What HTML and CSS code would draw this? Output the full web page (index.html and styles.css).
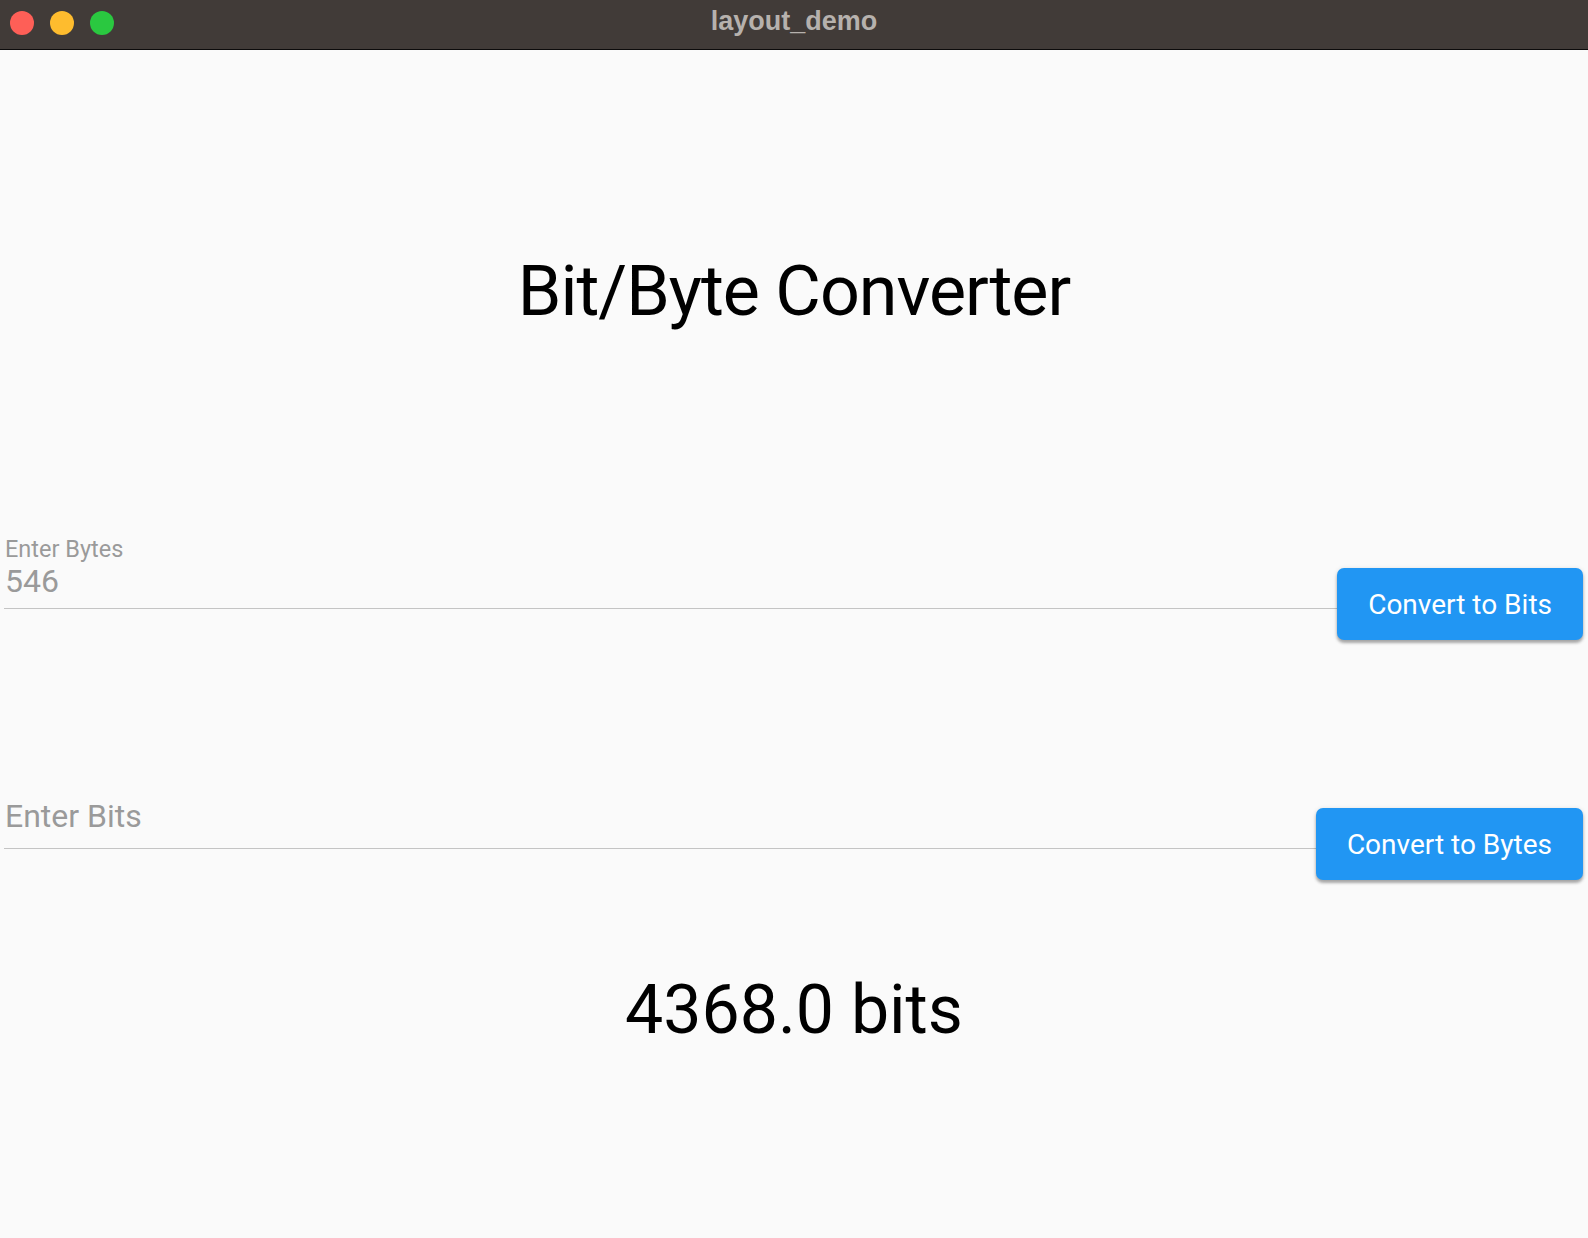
FILE: index.html
```html
<!DOCTYPE html>
<html>
<head>
<meta charset="utf-8">
<title>layout_demo</title>
<link rel="stylesheet" href="styles.css">
</head>
<body>
<div class="window">
  <header class="titlebar">
    <div class="lights">
      <span class="light red"></span>
      <span class="light yellow"></span>
      <span class="light green"></span>
    </div>
    <div class="win-title">layout_demo</div>
  </header>
  <main class="content">
    <h1 class="heading">Bit/Byte Converter</h1>
    <div class="row row-bytes">
      <div class="field">
        <div class="field-label">Enter Bytes</div>
        <div class="field-value">546</div>
      </div>
      <button class="btn">Convert to Bits</button>
    </div>
    <div class="row row-bits">
      <div class="field field-empty">
        <div class="field-value">Enter Bits</div>
      </div>
      <button class="btn">Convert to Bytes</button>
    </div>
    <div class="result">4368.0 bits</div>
  </main>
</div>
</body>
</html>
```
FILE: styles.css
```css
* { box-sizing: border-box; }
html, body {
  margin: 0;
  padding: 0;
  background: #fafafa;
}
body {
  font-family: Roboto, "Liberation Sans", sans-serif;
  width: 1588px;
  height: 1238px;
  overflow: hidden;
}
.window {
  display: flex;
  flex-direction: column;
  height: 1238px;
}
.titlebar {
  height: 50px;
  flex: 0 0 50px;
  background: #413b38;
  border-bottom: 1px solid #0c0b0b;
  display: flex;
  align-items: center;
  position: relative;
}
.lights {
  display: flex;
  gap: 16px;
  padding-left: 10px;
  margin-top: -3px;
}
.light {
  width: 24px;
  height: 24px;
  border-radius: 50%;
  display: block;
}
.red { background: #fe5f57; }
.yellow { background: #febc2e; }
.green { background: #2ac840; }
.win-title {
  position: absolute;
  left: 0;
  right: 0;
  top: 0;
  height: 49px;
  line-height: 42px;
  text-align: center;
  font-family: "Liberation Sans", Arial, sans-serif;
  font-weight: bold;
  font-size: 27px;
  color: #b6b1ad;
}
.content {
  flex: 1;
  display: flex;
  flex-direction: column;
  padding: 0 4px 0 4px;
}
.heading {
  margin: 200px 0 0 0;
  font-weight: 400;
  font-size: 70px;
  letter-spacing: -1px;
  line-height: normal;
  text-align: center;
  color: #000;
}
.row {
  display: flex;
  align-items: flex-start;
}
.row-bytes { margin-top: 203px; }
.row-bits { margin-top: 135px; }
.field {
  flex: 1;
  border-bottom: 1.5px solid #c4c4c4;
  color: #9a9a9a;
  padding-bottom: 9px;
}
.field-label {
  font-size: 23.5px;
  line-height: 28px;
  padding-left: 1px;
}
.field-value {
  font-size: 32px;
  line-height: 36px;
  padding-left: 1px;
}
.field-empty {
  padding-top: 23px;
  padding-bottom: 14px;
}
.btn {
  margin-top: 33px;
  margin-right: 1px;
  height: 72px;
  padding: 0 31px;
  border: none;
  border-radius: 7px;
  background: #2196f3;
  color: #fff;
  font-family: Roboto, "Liberation Sans", sans-serif;
  font-size: 28px;
  font-weight: 400;
  box-shadow: 0 3px 3px rgba(0,0,0,0.28), 0 1px 5px rgba(0,0,0,0.14);
  white-space: nowrap;
}
.result {
  margin-top: 90px;
  font-size: 68px;
  line-height: normal;
  text-align: center;
  color: #000;
}
```
